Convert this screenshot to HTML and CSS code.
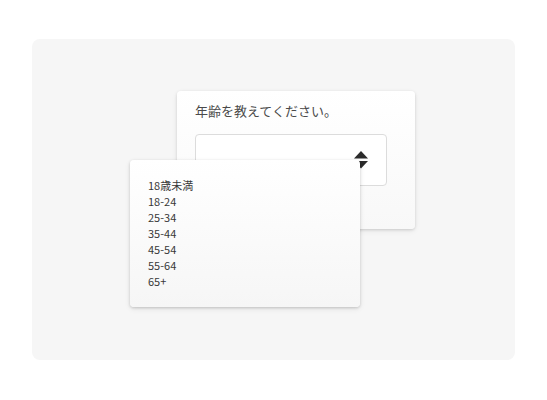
FILE: index.html
```html
<!DOCTYPE html>
<html lang="ja">
<head>
<meta charset="utf-8">
<link rel="stylesheet" href="styles.css">
</head>
<body>
<div class="panel">
  <div class="stage">
    <div class="card">
      <div class="title">年齢を教えてください。</div>
      <div class="select">
        <svg class="arrows" width="14" height="18" viewBox="0 0 14 18">
          <polygon points="0,7.5 7,0 14,7.5" fill="#2b2b2b"/>
          <polygon points="0,10 14,10 7,17.5" fill="#2b2b2b"/>
        </svg>
      </div>
    </div>
    <div class="menu">
      <div class="item">18歳未満</div>
      <div class="item">18-24</div>
      <div class="item">25-34</div>
      <div class="item">35-44</div>
      <div class="item">45-54</div>
      <div class="item">55-64</div>
      <div class="item">65+</div>
    </div>
  </div>
</div>
</body>
</html>
```

FILE: styles.css
```css
html, body {
  margin: 0;
  padding: 0;
  background: #ffffff;
  font-family: "Noto Sans CJK JP", "Noto Sans", sans-serif;
}
body {
  padding: 39px 0 0 32px;
}
.panel {
  width: 483px;
  height: 321px;
  background: #f6f6f6;
  border-radius: 8px;
}
.stage {
  position: relative;
  padding: 52px 0 0 145px;
}
.card {
  width: 238px;
  height: 138px;
  box-sizing: border-box;
  padding: 10px 0 0 18px;
  background: linear-gradient(#ffffff, #f8f8f8);
  border-radius: 4px;
  box-shadow: 0 1px 3px rgba(0,0,0,0.14), 0 2px 6px rgba(0,0,0,0.06);
}
.title {
  font-size: 13px;
  line-height: 20px;
  color: #4a4a4a;
}
.select {
  margin-top: 13px;
  width: 192px;
  height: 52px;
  box-sizing: border-box;
  border: 1px solid #dcdcdc;
  border-radius: 4px;
  background: #fff;
  display: flex;
  align-items: center;
  justify-content: flex-end;
  padding-right: 18px;
}
.arrows {
  display: block;
  margin-top: -1px;
}
.menu {
  position: absolute;
  left: 98px;
  top: 121px;
  width: 230px;
  height: 147px;
  box-sizing: border-box;
  padding: 17px 18px;
  background: linear-gradient(#ffffff, #f6f6f6);
  border-radius: 4px;
  box-shadow: 0 1px 3px rgba(0,0,0,0.18), 0 2px 6px rgba(0,0,0,0.07);
}
.item {
  font-size: 11px;
  line-height: 16px;
  color: #383838;
}
```
